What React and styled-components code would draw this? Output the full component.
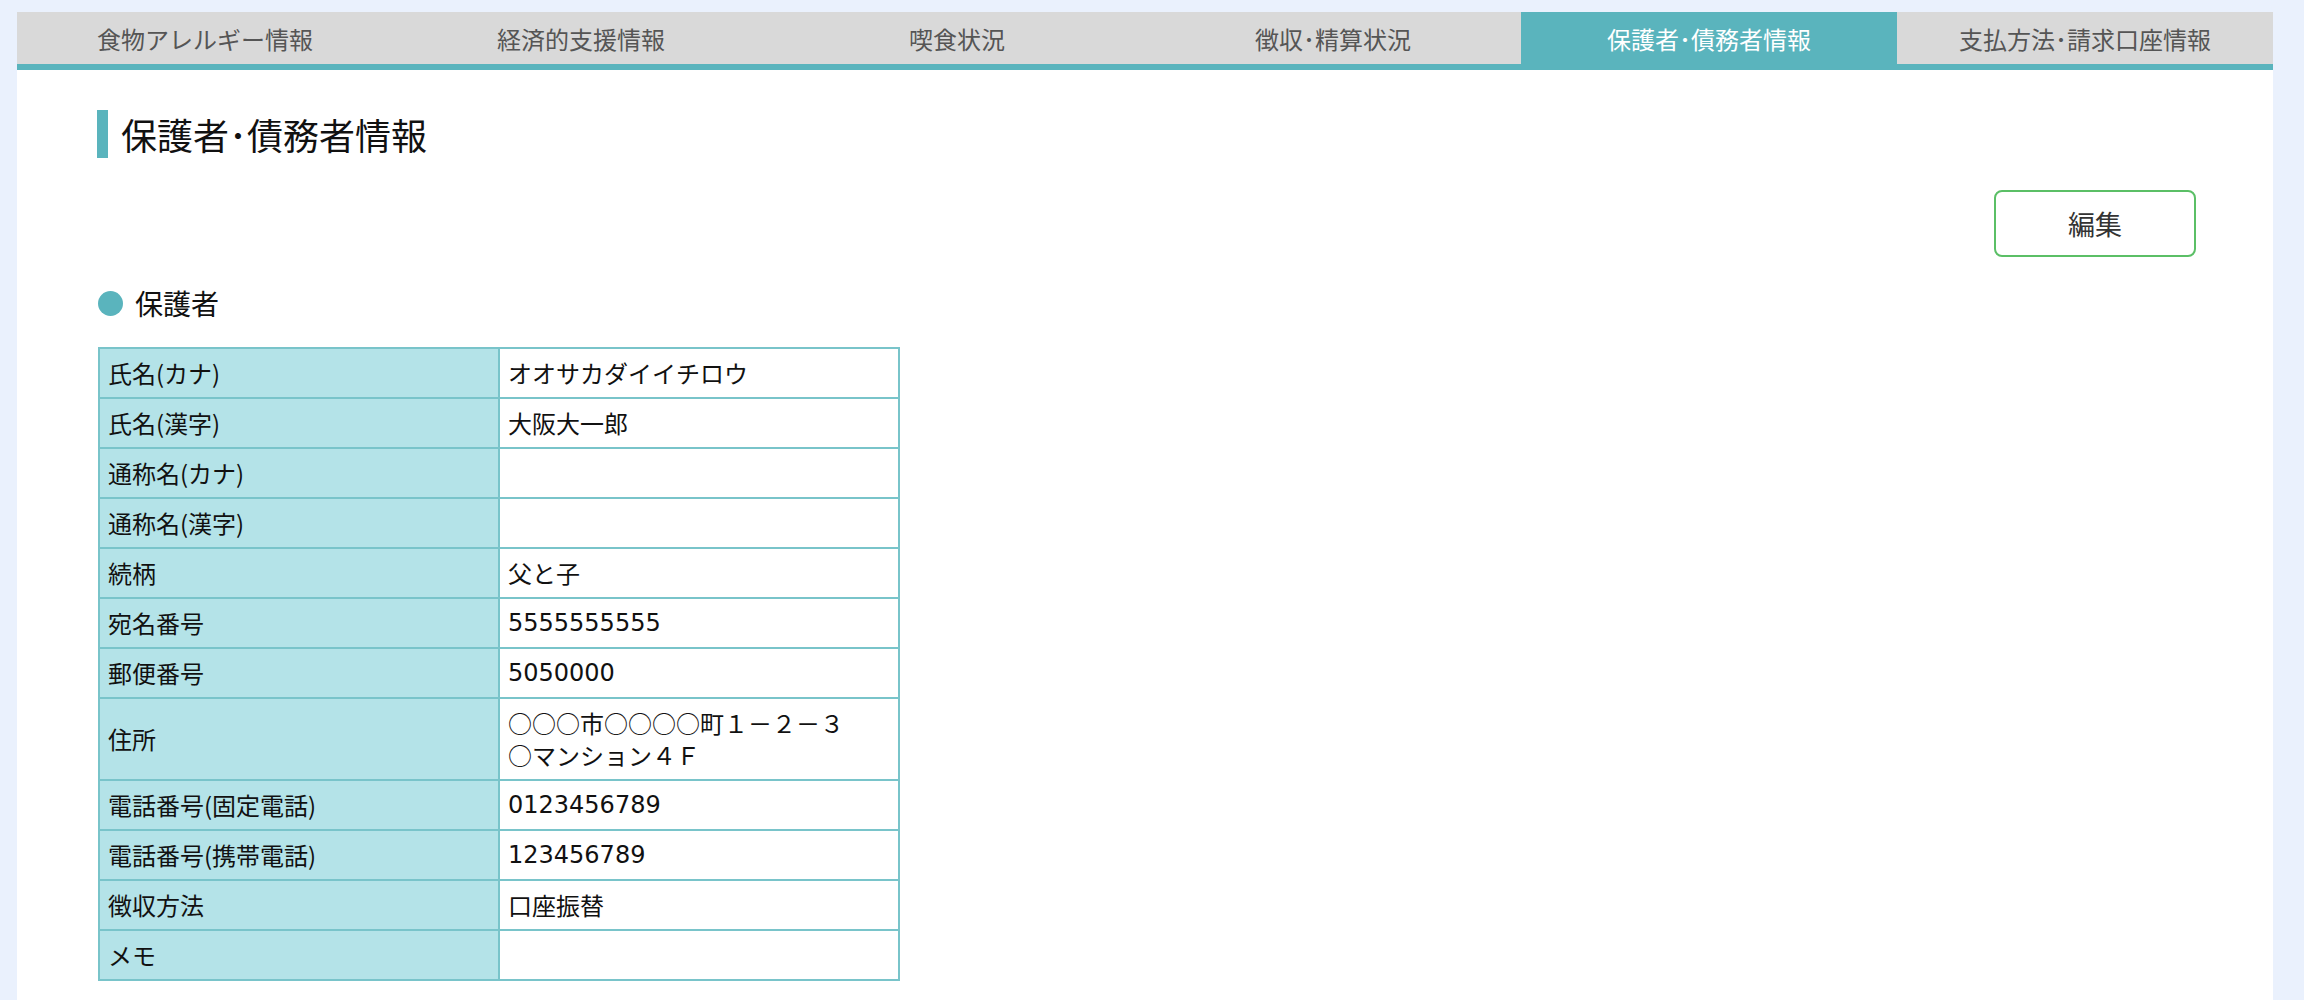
import React from 'react';
import styled, { createGlobalStyle } from 'styled-components';

const teal = '#5ab4bd';

const GlobalStyle = createGlobalStyle`
  html, body {
    margin: 0;
    padding: 0;
  }
  body {
    background-color: #eaf1fd;
    font-family: "Noto Sans CJK JP", "Noto Sans", sans-serif;
    color: #111;
  }
  * {
    box-sizing: border-box;
  }
`;

const Page = styled.div`
  padding: 12px 31px 0 17px;
`;

const Panel = styled.div`
  background-color: #fff;
  min-height: calc(100vh - 12px);
`;

const TabBar = styled.nav`
  display: grid;
  grid-template-columns: repeat(6, 1fr);
  background-color: #d9d9d9;
  border-bottom: 6px solid ${teal};
`;

const Tab = styled.div`
  height: 52px;
  display: flex;
  align-items: center;
  justify-content: center;
  font-size: 24px;
  color: ${props => (props.$active ? '#fff' : '#555')};
  background-color: ${props => (props.$active ? teal : 'transparent')};
  cursor: pointer;
`;

const Content = styled.main`
  padding: 40px 77px 60px 80px;
`;

const Title = styled.h1`
  display: flex;
  align-items: center;
  gap: 13px;
  height: 48px;
  margin: 0;
  font-size: 36px;
  font-weight: 400;
  line-height: 48px;
  color: #111;

  &:before {
    content: '';
    width: 11px;
    height: 48px;
    background-color: ${teal};
  }
`;

const Toolbar = styled.div`
  display: flex;
  justify-content: flex-end;
  margin-top: 32px;
`;

const EditButton = styled.button`
  width: 202px;
  height: 67px;
  background-color: #fff;
  border: 2px solid #5bbf66;
  border-radius: 8px;
  font-family: inherit;
  font-size: 27px;
  color: #333;
  cursor: pointer;
`;

const SectionHeading = styled.h2`
  display: flex;
  align-items: center;
  gap: 12px;
  height: 40px;
  margin: 26px 0 0 1px;
  font-size: 28px;
  font-weight: 400;
  color: #111;

  &:before {
    content: '';
    width: 25px;
    height: 25px;
    border-radius: 50%;
    background-color: ${teal};
  }
`;

const InfoTable = styled.table`
  width: 800px;
  margin: 24px 0 0 1px;
  border-collapse: collapse;
  table-layout: fixed;
  border: 2px solid #79c4ca;
`;

const LabelCell = styled.th`
  width: 400px;
  padding: 8px;
  border: 2px solid #79c4ca;
  background-color: #b4e3e8;
  font-size: 24px;
  font-weight: 400;
  line-height: 32px;
  text-align: left;
  color: #111;
`;

const ValueCell = styled.td`
  width: 400px;
  padding: 8px;
  border: 2px solid #79c4ca;
  background-color: #fff;
  font-family: ${props =>
    props.$num
      ? '"DejaVu Sans", "Noto Sans CJK JP", sans-serif'
      : '"Noto Sans CJK JP", "Noto Sans", sans-serif'};
  font-size: 24px;
  line-height: 32px;
  color: #111;
`;

const tabs = [
  '食物アレルギー情報',
  '経済的支援情報',
  '喫食状況',
  '徴収･精算状況',
  '保護者･債務者情報',
  '支払方法･請求口座情報',
];

const guardian = [
  { label: '氏名(カナ)', value: 'オオサカダイイチロウ' },
  { label: '氏名(漢字)', value: '大阪大一郎' },
  { label: '通称名(カナ)', value: '' },
  { label: '通称名(漢字)', value: '' },
  { label: '続柄', value: '父と子' },
  { label: '宛名番号', value: '5555555555', num: true },
  { label: '郵便番号', value: '5050000', num: true },
  { label: '住所', value: ['○○○市○○○○町１－２－３', '○マンション４Ｆ'] },
  { label: '電話番号(固定電話)', value: '0123456789', num: true },
  { label: '電話番号(携帯電話)', value: '123456789', num: true },
  { label: '徴収方法', value: '口座振替' },
  { label: 'メモ', value: '' },
];

const App = () => {
  return (
    <>
      <GlobalStyle />
      <Page>
        <Panel>
          <TabBar>
            {tabs.map(t => (
              <Tab key={t} $active={t === '保護者･債務者情報'}>
                {t}
              </Tab>
            ))}
          </TabBar>

          <Content>
            <Title>保護者･債務者情報</Title>

            <Toolbar>
              <EditButton type="button">編集</EditButton>
            </Toolbar>

            <SectionHeading>保護者</SectionHeading>

            <InfoTable>
              <tbody>
                {guardian.map(row => (
                  <tr key={row.label}>
                    <LabelCell>{row.label}</LabelCell>
                    <ValueCell $num={row.num}>
                      {Array.isArray(row.value)
                        ? row.value.map((line, i) => <div key={i}>{line}</div>)
                        : row.value}
                    </ValueCell>
                  </tr>
                ))}
              </tbody>
            </InfoTable>
          </Content>
        </Panel>
      </Page>
    </>
  );
};

export default App;
